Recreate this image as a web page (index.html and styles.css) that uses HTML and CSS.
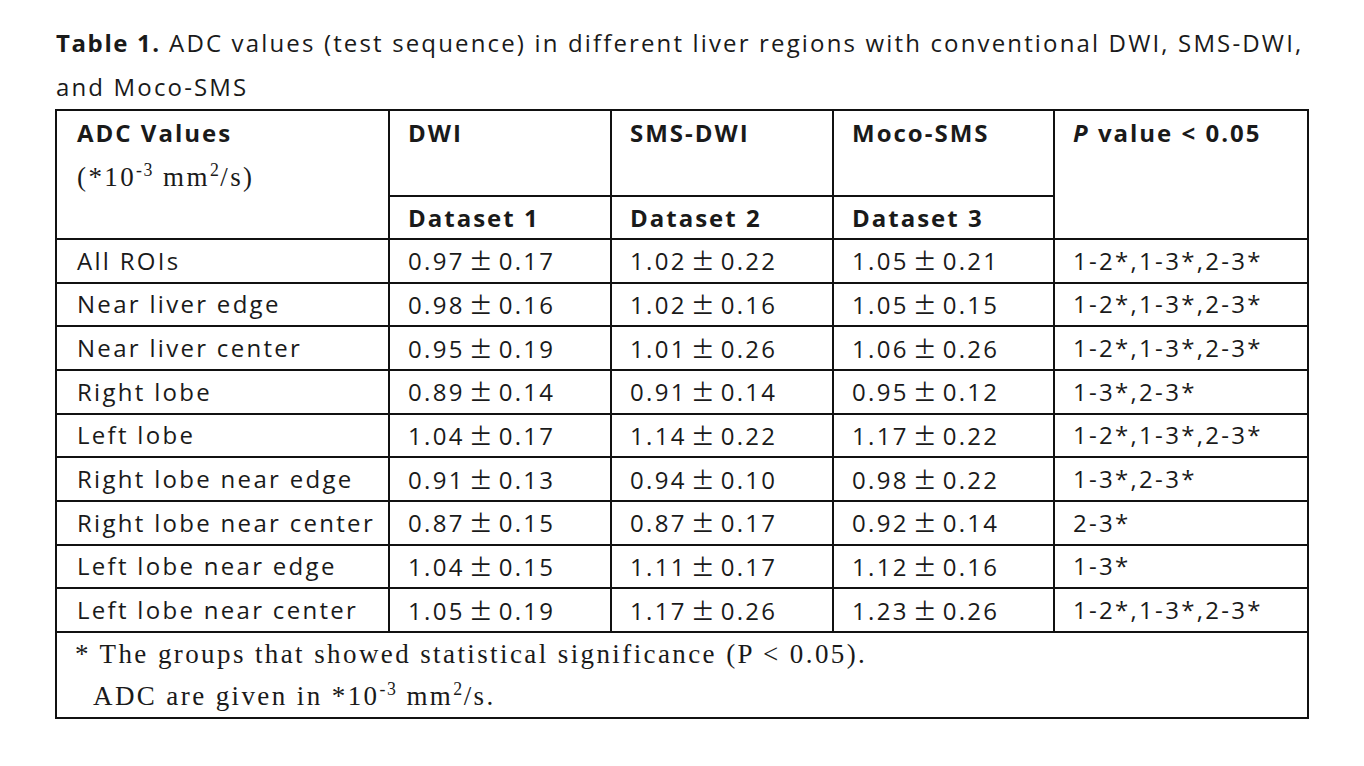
FILE: index.html
```html
<!DOCTYPE html>
<html lang="en">
<head>
<meta charset="utf-8">
<title>Table 1</title>
<link rel="stylesheet" href="styles.css">
</head>
<body>
<main class="page">
  <p class="caption"><b>Table 1.</b> ADC values (test sequence) in different liver regions with conventional DWI, SMS-DWI,<br>and Moco-SMS</p>
  <table class="adc">
    <colgroup>
      <col class="c1"><col class="c2"><col class="c3"><col class="c4"><col class="c5">
    </colgroup>
    <thead>
      <tr class="h1">
        <th rowspan="2" class="first">ADC Values<br><span class="serif">(*10<sup>-3</sup> mm<sup>2</sup>/s)</span></th>
        <th>DWI</th>
        <th>SMS-DWI</th>
        <th>Moco-SMS</th>
        <th rowspan="2"><i>P</i> value &lt; 0.05</th>
      </tr>
      <tr class="h2">
        <th>Dataset 1</th>
        <th>Dataset 2</th>
        <th>Dataset 3</th>
      </tr>
    </thead>
    <tbody>
      <tr><td class="first">All ROIs</td><td>0.97<span class="pm">±</span>0.17</td><td>1.02<span class="pm">±</span>0.22</td><td>1.05<span class="pm">±</span>0.21</td><td>1-2*,1-3*,2-3*</td></tr>
      <tr><td class="first">Near liver edge</td><td>0.98<span class="pm">±</span>0.16</td><td>1.02<span class="pm">±</span>0.16</td><td>1.05<span class="pm">±</span>0.15</td><td>1-2*,1-3*,2-3*</td></tr>
      <tr><td class="first">Near liver center</td><td>0.95<span class="pm">±</span>0.19</td><td>1.01<span class="pm">±</span>0.26</td><td>1.06<span class="pm">±</span>0.26</td><td>1-2*,1-3*,2-3*</td></tr>
      <tr><td class="first">Right lobe</td><td>0.89<span class="pm">±</span>0.14</td><td>0.91<span class="pm">±</span>0.14</td><td>0.95<span class="pm">±</span>0.12</td><td>1-3*,2-3*</td></tr>
      <tr><td class="first">Left lobe</td><td>1.04<span class="pm">±</span>0.17</td><td>1.14<span class="pm">±</span>0.22</td><td>1.17<span class="pm">±</span>0.22</td><td>1-2*,1-3*,2-3*</td></tr>
      <tr><td class="first">Right lobe near edge</td><td>0.91<span class="pm">±</span>0.13</td><td>0.94<span class="pm">±</span>0.10</td><td>0.98<span class="pm">±</span>0.22</td><td>1-3*,2-3*</td></tr>
      <tr><td class="first">Right lobe near center</td><td>0.87<span class="pm">±</span>0.15</td><td>0.87<span class="pm">±</span>0.17</td><td>0.92<span class="pm">±</span>0.14</td><td>2-3*</td></tr>
      <tr><td class="first">Left lobe near edge</td><td>1.04<span class="pm">±</span>0.15</td><td>1.11<span class="pm">±</span>0.17</td><td>1.12<span class="pm">±</span>0.16</td><td>1-3*</td></tr>
      <tr><td class="first">Left lobe near center</td><td>1.05<span class="pm">±</span>0.19</td><td>1.17<span class="pm">±</span>0.26</td><td>1.23<span class="pm">±</span>0.26</td><td>1-2*,1-3*,2-3*</td></tr>
    </tbody>
    <tfoot>
      <tr>
        <td colspan="5" class="note">
          <span class="note-line">* The groups that showed statistical significance (P &lt; 0.05).</span>
          <span class="note-line indent">ADC are given in *10<sup>-3</sup> mm<sup>2</sup>/s.</span>
        </td>
      </tr>
    </tfoot>
  </table>
</main>
</body>
</html>
```

FILE: styles.css
```css
html, body {
  margin: 0;
  padding: 0;
  background: #ffffff;
}

.page {
  padding: 21px 0 0 56px;
  color: #1a1a1a;
  font-family: "Open Sans", "Liberation Sans", sans-serif;
  font-size: 24px;
  letter-spacing: 2px;
}

.caption {
  margin: 0;
  line-height: 44px;
  letter-spacing: 2.15px;
  white-space: nowrap;
}

.caption b {
  font-weight: 700;
  letter-spacing: 1.6px;
}

.adc {
  border-collapse: collapse;
  table-layout: fixed;
  width: 1252px;
  margin-left: -1px;
}

.c1 { width: 333px; }
.c2 { width: 222px; }
.c3 { width: 222px; }
.c4 { width: 221px; }
.c5 { width: 254px; }

.adc th,
.adc td {
  border: 2px solid #111111;
  padding: 0 0 0 18px;
  text-align: left;
  white-space: nowrap;
}

.adc th {
  font-weight: 700;
  vertical-align: top;
  line-height: 44px;
  padding-top: 0;
}

.adc .first {
  padding-left: 20px;
}

.h1 th {
  height: 84px;
}

.h2 th {
  height: 41px;
  vertical-align: middle;
  line-height: 40px;
}

.adc tbody td {
  height: 41.67px;
  line-height: 40px;
  vertical-align: middle;
  letter-spacing: 2.3px;
}

.serif {
  font-family: "Liberation Serif", "Times New Roman", serif;
  font-weight: 400;
  font-size: 27px;
  letter-spacing: 2.4px;
}

sup {
  font-size: 0.66em;
  line-height: 0;
  vertical-align: 0.55em;
  letter-spacing: 1.5px;
}

.pm {
  font-family: "Noto Sans CJK JP", "DejaVu Sans", sans-serif;
  letter-spacing: 0;
  margin: 0 6px 0 4px;
}

.note {
  height: 82px;
  vertical-align: top;
  font-family: "Liberation Serif", "Times New Roman", serif;
  font-size: 27px;
  letter-spacing: 2.4px;
}

.note-line {
  display: block;
  line-height: 42px;
}

.indent {
  padding-left: 18px;
}
```
